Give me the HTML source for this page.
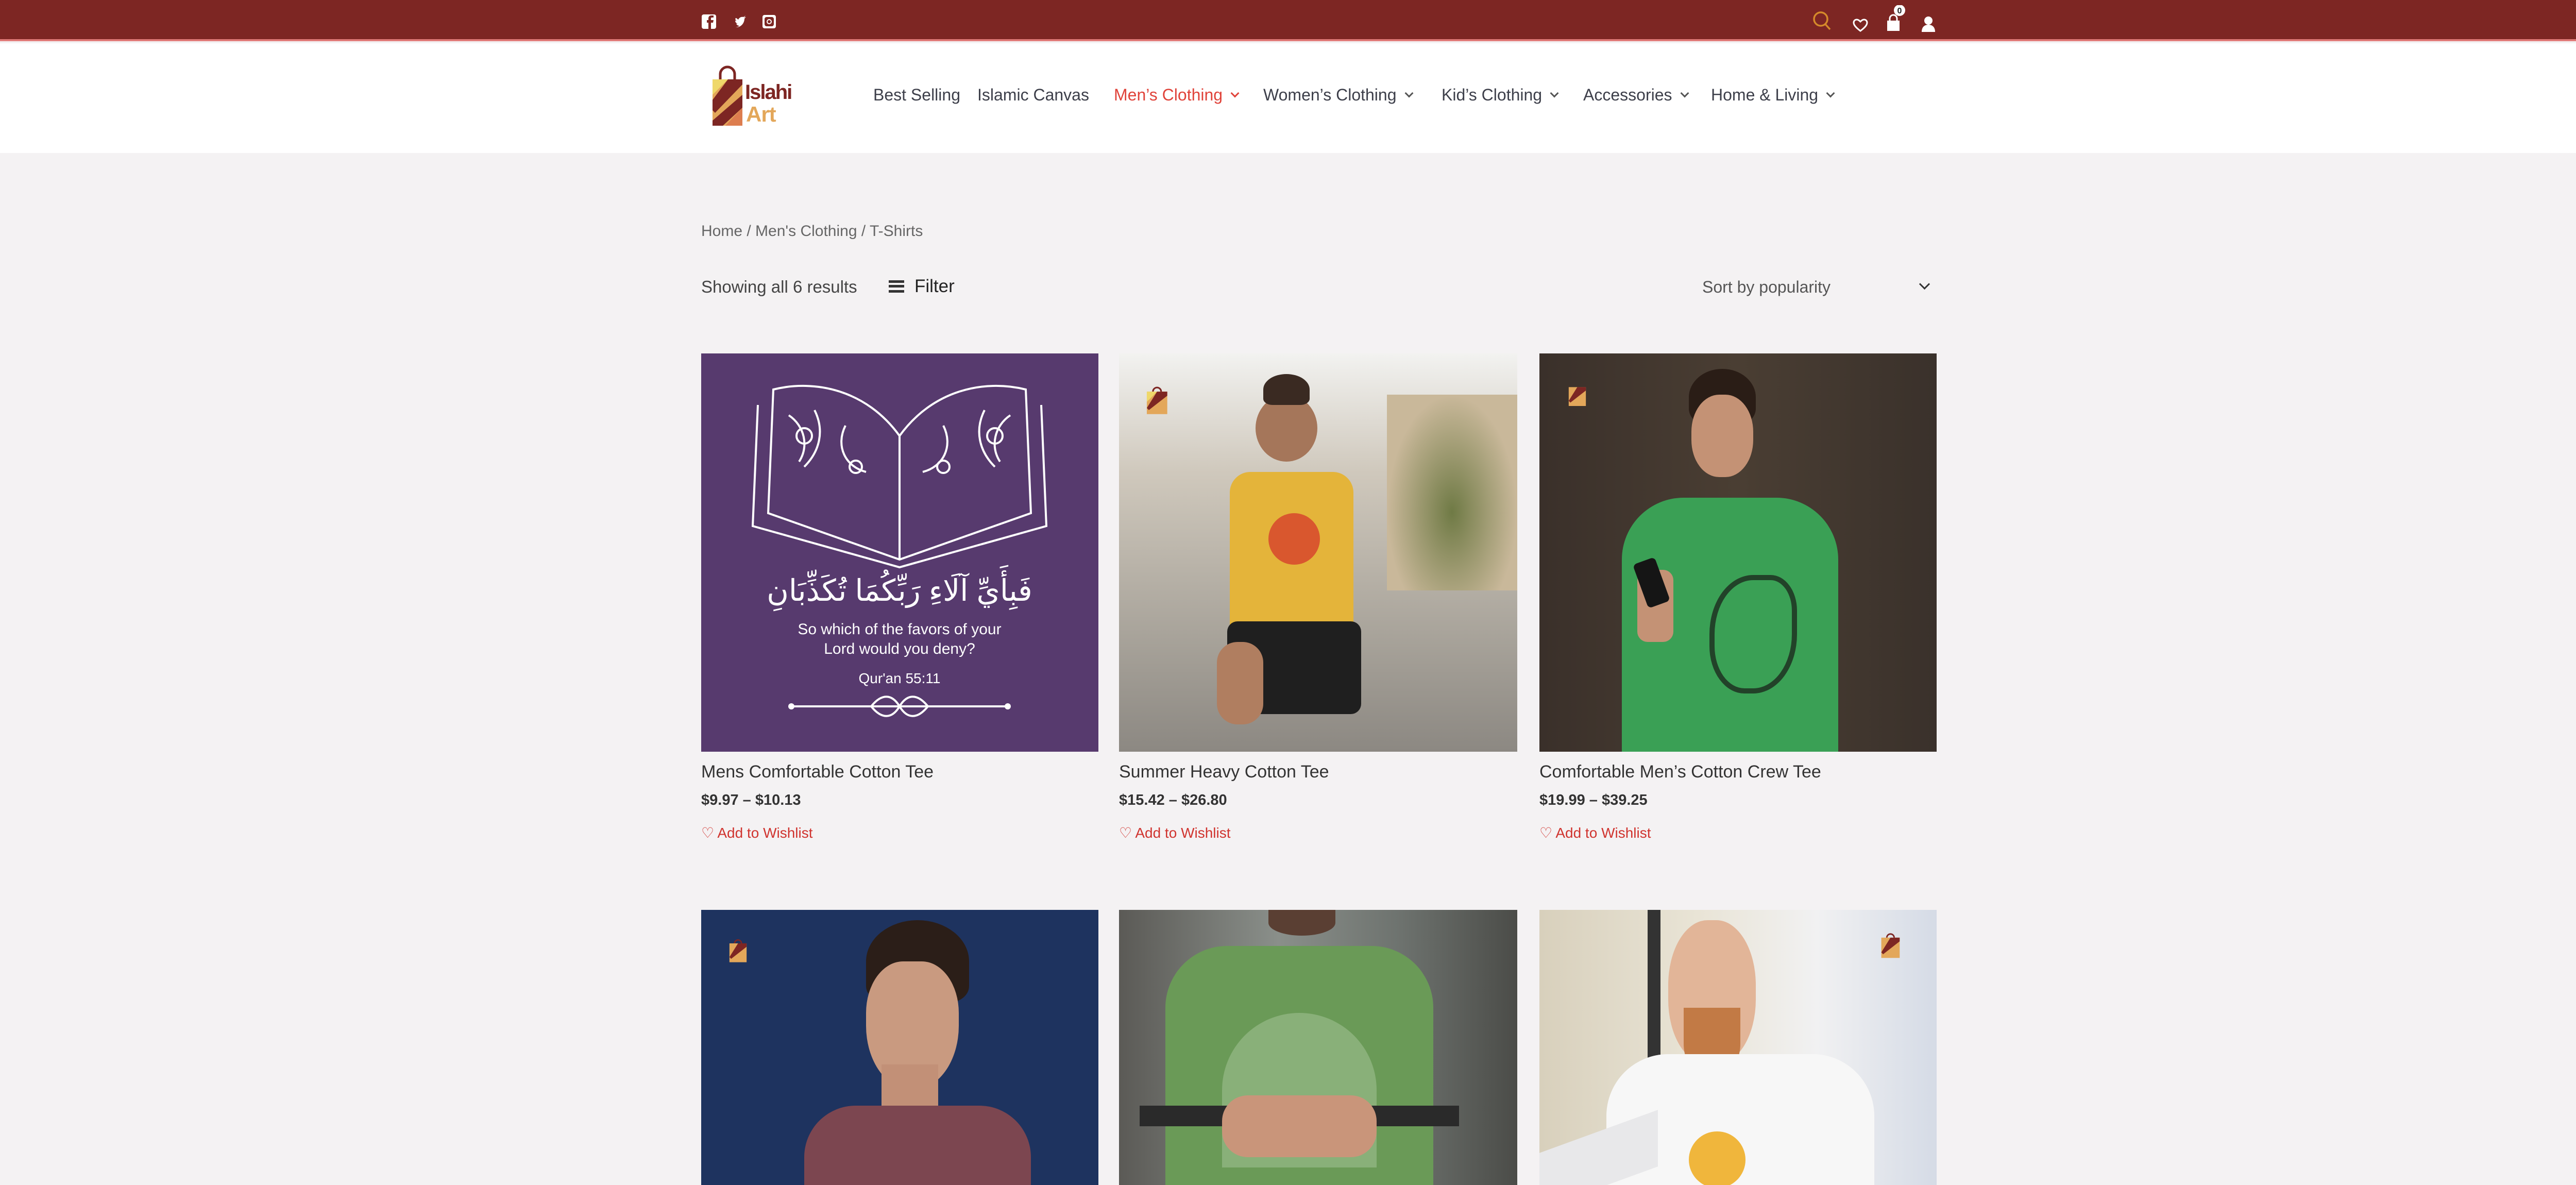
<!DOCTYPE html>
<html><head><meta charset="utf-8">
<style>
*{margin:0;padding:0;box-sizing:border-box}
body{width:5120px;height:2300px;overflow:hidden;background:#f4f2f3;font-family:"Liberation Sans",sans-serif;position:relative;color:#3a3a3a}
.a{position:absolute}
.top{left:0;top:0;width:5120px;height:80px;background:#7d2623;border-bottom:4px solid #e07a78}
.hdr{left:0;top:84px;width:5120px;height:213px;background:#fff}
.nav{top:166px;font-size:32px;color:#3d3f4a;white-space:nowrap}
.chev{display:inline-block;width:12px;height:12px;border-right:3px solid #555;border-bottom:3px solid #555;transform:rotate(45deg);margin-left:18px;position:relative;top:-8px}
.img{overflow:hidden}
.t{font-size:34px;color:#333;white-space:nowrap}
.p{font-size:29px;font-weight:bold;color:#333}
.w{font-size:28px;color:#d0332e}
</style></head><body>
<div class="a top"></div>
<svg class="a" style="left:1362px;top:26px" width="150" height="32" viewBox="0 0 150 32">
<rect x="0" y="2" width="28" height="28" rx="4" fill="#fff"/><path d="M18 30V18h4l1-5h-5v-3c0-1.5.5-2 2-2h3V4h-4c-4 0-6 2-6 6v3h-3v5h3v12z" fill="#7d2623"/>
<g transform="translate(22,0)"><path d="M44 9c2 0 3 2 5 3 2-4 6-6 10-5 2-1 3-2 4-3-1 2-2 3-3 4l4-1-3 3c0 9-7 18-18 17 3 0 6-1 8-3-3 0-5-2-6-4h3c-3-1-5-3-5-6l3 1c-3-2-3-5-2-6z" fill="#fff"/></g>
<rect x="118" y="3" width="26" height="26" rx="4" fill="#fff"/><rect x="122" y="7" width="18" height="18" rx="4" fill="#7d2623"/><circle cx="131" cy="16" r="5" fill="#fff"/><circle cx="131" cy="16" r="3" fill="#7d2623"/>
</svg>
<svg class="a" style="left:3512px;top:10px" width="260" height="60" viewBox="0 0 260 60">
<circle cx="22" cy="27" r="13" fill="none" stroke="#d58a2a" stroke-width="3.5"/><line x1="31" y1="37" x2="40" y2="47" stroke="#d58a2a" stroke-width="3.5"/>
<path d="M99 50c-8-6-13-11-13-16 0-4 3-6 6-6 3 0 5 2 7 4 2-2 4-4 7-4 3 0 6 2 6 6 0 5-5 10-13 16z" fill="none" stroke="#fff" stroke-width="3"/>
<rect x="151" y="30" width="24" height="20" fill="#fff"/><path d="M156 31v-5a7 7 0 0 1 14 0v5" fill="none" stroke="#fff" stroke-width="3"/>
<circle cx="175" cy="10" r="11" fill="#fff"/><text x="175" y="16" font-size="16" font-weight="bold" text-anchor="middle" fill="#222" font-family="Liberation Sans">0</text>
<circle cx="231" cy="30" r="8" fill="#fff"/><path d="M218 52c0-10 6-14 13-14s13 4 13 14z" fill="#fff"/>
</svg>
<div class="a hdr"></div>
<svg class="a" style="left:1378px;top:124px" width="210" height="125" viewBox="0 0 210 125">
<path d="M20 30v-10a14 14 0 0 1 28 0v10" fill="none" stroke="#7d2623" stroke-width="5"/>
<path d="M5 30h58v90H5z" fill="#e3a75a"/>
<path d="M5 30h30L5 60z" fill="#efd86a"/>
<path d="M35 30h28v10L10 95 5 90V70z" fill="#7d2623"/>
<path d="M63 60v25L25 120H5v-10z" fill="#7d2623"/>
<path d="M63 85v35H30z" fill="#dd7d4f"/>
<text x="68" y="68" font-size="40" font-weight="bold" fill="#7d2623" font-family="Liberation Sans" letter-spacing="-2">Islahi</text>
<text x="70" y="112" font-size="42" font-weight="bold" fill="#e3a75a" font-family="Liberation Sans" letter-spacing="-1">Art</text>
</svg>
<div class="a nav" style="left:1695px">Best Selling</div>
<div class="a nav" style="left:1897px">Islamic Canvas</div>
<div class="a nav" style="left:2162px;color:#e0433a">Men’s Clothing<span class="chev" style="border-color:#e0433a"></span></div>
<div class="a nav" style="left:2452px">Women’s Clothing<span class="chev"></span></div>
<div class="a nav" style="left:2798px">Kid’s Clothing<span class="chev"></span></div>
<div class="a nav" style="left:3073px">Accessories<span class="chev"></span></div>
<div class="a nav" style="left:3321px">Home &amp; Living<span class="chev"></span></div>

<div class="a" style="left:1361px;top:432px;font-size:30px;color:#666">Home / Men's Clothing / T-Shirts</div>
<div class="a" style="left:1361px;top:538px;font-size:33px;color:#444">Showing all 6 results</div>
<div class="a" style="left:1725px;top:544px;width:30px;height:24px;border-top:5px solid #333;border-bottom:5px solid #333"><div style="margin-top:4px;height:5px;background:#333"></div></div>
<div class="a" style="left:1775px;top:536px;font-size:35px;color:#222">Filter</div>
<div class="a" style="left:3304px;top:539px;font-size:32px;color:#555">Sort by popularity</div>
<div class="a" style="left:3728px;top:544px;width:15px;height:15px;border-right:3px solid #333;border-bottom:3px solid #333;transform:rotate(45deg)"></div>

<div class="a img" style="left:1361px;top:686px;width:771px;height:773px;background:#573a6e">
<svg width="771" height="773" viewBox="0 0 771 773" font-family="Liberation Sans">
<g fill="none" stroke="#fff" stroke-width="4">
<path d="M385 400L130 310 140 70c80-20 180 0 245 90 65-90 165-110 245-90l10 240z"/>
<path d="M385 160v240M110 100l-10 235 285 80 285-80-10-235"/>
<path d="M170 120c30 20 40 60 20 90M220 110c20 40 10 80-20 110M280 140c-20 40 0 80 40 90M470 140c20 40 0 80-40 90M550 110c-20 40-10 80 20 110M600 120c-30 20-40 60-20 90"/>
<circle cx="200" cy="160" r="15"/><circle cx="570" cy="160" r="15"/><circle cx="300" cy="220" r="12"/><circle cx="470" cy="220" r="12"/>
<path d="M175 685h420M330 685c20-25 40-25 55 0 15-25 35-25 55 0-20 25-40 25-55 0-15 25-35 25-55 0z"/>
</g>
<circle cx="175" cy="685" r="6" fill="#fff"/><circle cx="595" cy="685" r="6" fill="#fff"/>
<text x="385" y="480" font-size="58" fill="#fff" text-anchor="middle" font-family="Liberation Sans,'Noto Sans CJK SC',sans-serif" direction="rtl">فَبِأَيِّ آلَاءِ رَبِّكُمَا تُكَذِّبَانِ</text>
<text x="385" y="545" font-size="30" fill="#fff" text-anchor="middle">So which of the favors of your</text>
<text x="385" y="583" font-size="30" fill="#fff" text-anchor="middle">Lord would you deny?</text>
<text x="385" y="640" font-size="28" fill="#fff" text-anchor="middle">Qur'an 55:11</text>
</svg></div>
<div class="a img" style="left:2172px;top:686px;width:773px;height:773px;background:linear-gradient(180deg,#f2f2f0 0%,#cfc8bc 30%,#a9a49b 70%,#8c8882 100%)">
<div class="a" style="left:520px;top:80px;width:253px;height:380px;background:radial-gradient(ellipse at 50% 60%,#6f7a45,#c9b89a 70%)"></div>
<div class="a" style="left:265px;top:80px;width:120px;height:130px;border-radius:50%;background:#a5765a"></div>
<div class="a" style="left:280px;top:40px;width:90px;height:60px;border-radius:50% 50% 20% 20%;background:#3a2a22"></div>
<div class="a" style="left:215px;top:230px;width:240px;height:320px;border-radius:40px 40px 10px 10px;background:#e4b43a"></div>
<div class="a" style="left:290px;top:310px;width:100px;height:100px;border-radius:50%;background:#d9572e"></div>
<div class="a" style="left:210px;top:520px;width:260px;height:180px;border-radius:20px;background:#1f1f1f"></div>
<div class="a" style="left:190px;top:560px;width:90px;height:160px;border-radius:40px;background:#b07e60"></div>
</div>
<div class="a img" style="left:2988px;top:686px;width:771px;height:773px;background:linear-gradient(90deg,#3a302a,#4a3e33 50%,#3a312b)">
<div class="a" style="left:290px;top:30px;width:130px;height:110px;border-radius:50% 50% 30% 30%;background:#2a1d16"></div>
<div class="a" style="left:295px;top:80px;width:120px;height:160px;border-radius:45%;background:#c49275"></div>
<div class="a" style="left:160px;top:280px;width:420px;height:493px;border-radius:120px 120px 0 0;background:#3aa055"></div>
<div class="a" style="left:190px;top:420px;width:70px;height:140px;border-radius:20px;background:#c49275"></div>
<div class="a" style="left:195px;top:400px;width:45px;height:90px;border-radius:8px;background:#151515;transform:rotate(-20deg)"></div>
<div class="a" style="left:330px;top:430px;width:170px;height:230px;border:10px solid #1d2a1e;border-radius:50% 30% 50% 40%;opacity:.8"></div>
</div>
<svg class="a" style="left:2222px;top:748px" width="50" height="60" viewBox="0 0 63 75"><path d="M20 15a10 10 0 0 1 20 0" fill="none" stroke="#7d2623" stroke-width="4"/><path d="M5 15h50v55H5z" fill="#e3a75a"/><path d="M5 15h25L5 40z" fill="#efd86a"/><path d="M30 15h25v10L10 60 5 55z" fill="#7d2623"/></svg>
<svg class="a" style="left:3040px;top:748px" width="45" height="40" viewBox="0 0 63 60"><path d="M5 5h50v55H5z" fill="#e3a75a"/><path d="M30 5h25v10L10 50 5 45z" fill="#7d2623"/></svg>

<div class="a t" style="left:1361px;top:1479px">Mens Comfortable Cotton Tee</div>
<div class="a t" style="left:2172px;top:1479px">Summer Heavy Cotton Tee</div>
<div class="a t" style="left:2988px;top:1479px">Comfortable Men’s Cotton Crew Tee</div>
<div class="a p" style="left:1361px;top:1537px">$9.97 – $10.13</div>
<div class="a p" style="left:2172px;top:1537px">$15.42 – $26.80</div>
<div class="a p" style="left:2988px;top:1537px">$19.99 – $39.25</div>
<div class="a w" style="left:1361px;top:1600px">♡ Add to Wishlist</div>
<div class="a w" style="left:2172px;top:1600px">♡ Add to Wishlist</div>
<div class="a w" style="left:2988px;top:1600px">♡ Add to Wishlist</div>

<div class="a img" style="left:1361px;top:1766px;width:771px;height:534px;background:#1e335f">
<div class="a" style="left:320px;top:20px;width:200px;height:160px;border-radius:50% 50% 20% 20%;background:#2b1e18"></div>
<div class="a" style="left:320px;top:100px;width:180px;height:250px;border-radius:40% 40% 50% 50%;background:#c99a80"></div>
<div class="a" style="left:350px;top:300px;width:110px;height:120px;background:#c29077"></div>
<div class="a" style="left:200px;top:380px;width:440px;height:200px;border-radius:100px 100px 0 0;background:#7c4650"></div>
<svg class="a" style="left:50px;top:55px" width="45" height="50" viewBox="0 0 63 75"><path d="M5 15h50v55H5z" fill="#e3a75a"/><path d="M30 15h25v10L10 60 5 55z" fill="#7d2623"/><path d="M20 15a10 10 0 0 1 20 0" fill="none" stroke="#7d2623" stroke-width="4"/></svg>
</div>
<div class="a img" style="left:2172px;top:1766px;width:773px;height:534px;background:linear-gradient(90deg,#5b5a56,#8a8f8a 40%,#6e736f 70%,#4b4c48)">
<div class="a" style="left:290px;top:0;width:130px;height:50px;border-radius:0 0 50% 50%;background:#5a3f33"></div>
<div class="a" style="left:90px;top:70px;width:520px;height:470px;border-radius:120px 120px 0 0;background:#6a9a57"></div>
<div class="a" style="left:200px;top:200px;width:300px;height:300px;border-radius:50% 50% 0 0;background:#9fc08f;opacity:.6"></div>
<div class="a" style="left:40px;top:380px;width:620px;height:40px;background:#2a2a2a"></div>
<div class="a" style="left:200px;top:360px;width:300px;height:120px;border-radius:50px;background:#c9957a"></div>
</div>
<div class="a img" style="left:2988px;top:1766px;width:771px;height:534px;background:linear-gradient(90deg,#d8d0bc,#e9e4d6 40%,#f1f1f2 70%,#d5dbe6)">
<div class="a" style="left:210px;top:0;width:25px;height:534px;background:#333"></div>
<div class="a" style="left:250px;top:20px;width:170px;height:280px;border-radius:45%;background:#e2b598"></div>
<div class="a" style="left:280px;top:190px;width:110px;height:140px;border-radius:0 0 50% 50%;background:#c27a45"></div>
<div class="a" style="left:130px;top:280px;width:520px;height:260px;border-radius:120px 120px 0 0;background:#f7f7f7"></div>
<div class="a" style="left:290px;top:430px;width:110px;height:110px;border-radius:50%;background:#f0b63c"></div>
<div class="a" style="left:0;top:430px;width:230px;height:110px;background:#e8e8ea;transform:skewY(-20deg)"></div>
<svg class="a" style="left:660px;top:40px" width="45" height="60" viewBox="0 0 63 75"><path d="M20 15a10 10 0 0 1 20 0" fill="none" stroke="#7d2623" stroke-width="4"/><path d="M5 15h50v55H5z" fill="#e3a75a"/><path d="M30 15h25v10L10 60 5 55z" fill="#7d2623"/></svg>
</div>
</body></html>
